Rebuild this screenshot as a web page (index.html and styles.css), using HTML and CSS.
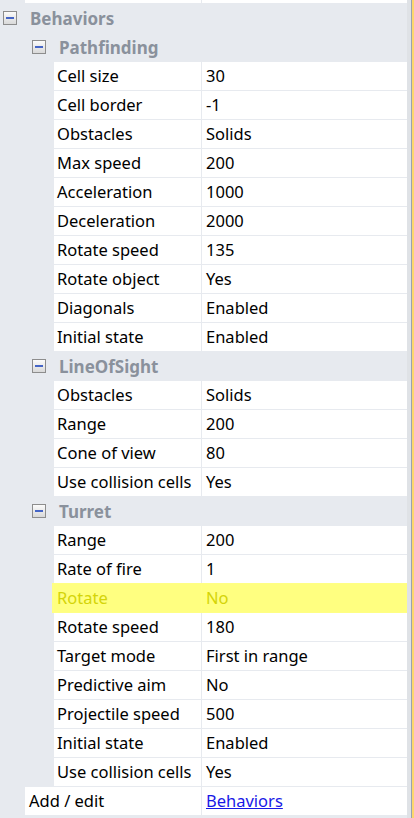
FILE: index.html
```html
<!DOCTYPE html>
<html>
<head>
<meta charset="utf-8">
<link rel="stylesheet" href="styles.css">
</head>
<body>
<div class="frame">
  <div class="panel">
    <div class="row l1 partial"><div class="cell"></div><div class="cell"></div></div>

    <div class="cat c0"><span class="box"></span><span class="title">Behaviors</span></div>
    <div class="cat c1"><span class="box"></span><span class="title">Pathfinding</span></div>
    <div class="row l2"><div class="cell">Cell size</div><div class="cell">30</div></div>
    <div class="row l2"><div class="cell">Cell border</div><div class="cell">-1</div></div>
    <div class="row l2"><div class="cell">Obstacles</div><div class="cell">Solids</div></div>
    <div class="row l2"><div class="cell">Max speed</div><div class="cell">200</div></div>
    <div class="row l2"><div class="cell">Acceleration</div><div class="cell">1000</div></div>
    <div class="row l2"><div class="cell">Deceleration</div><div class="cell">2000</div></div>
    <div class="row l2"><div class="cell">Rotate speed</div><div class="cell">135</div></div>
    <div class="row l2"><div class="cell">Rotate object</div><div class="cell">Yes</div></div>
    <div class="row l2"><div class="cell">Diagonals</div><div class="cell">Enabled</div></div>
    <div class="row l2"><div class="cell">Initial state</div><div class="cell">Enabled</div></div>

    <div class="cat c1"><span class="box"></span><span class="title">LineOfSight</span></div>
    <div class="row l2"><div class="cell">Obstacles</div><div class="cell">Solids</div></div>
    <div class="row l2"><div class="cell">Range</div><div class="cell">200</div></div>
    <div class="row l2"><div class="cell">Cone of view</div><div class="cell">80</div></div>
    <div class="row l2"><div class="cell">Use collision cells</div><div class="cell">Yes</div></div>

    <div class="cat c1"><span class="box"></span><span class="title">Turret</span></div>
    <div class="row l2"><div class="cell">Range</div><div class="cell">200</div></div>
    <div class="row l2"><div class="cell">Rate of fire</div><div class="cell">1</div></div>
    <div class="row l2 hl"><div class="cell">Rotate</div><div class="cell">No</div></div>
    <div class="row l2"><div class="cell">Rotate speed</div><div class="cell">180</div></div>
    <div class="row l2"><div class="cell">Target mode</div><div class="cell">First in range</div></div>
    <div class="row l2"><div class="cell">Predictive aim</div><div class="cell">No</div></div>
    <div class="row l2"><div class="cell">Projectile speed</div><div class="cell">500</div></div>
    <div class="row l2"><div class="cell">Initial state</div><div class="cell">Enabled</div></div>
    <div class="row l2"><div class="cell">Use collision cells</div><div class="cell">Yes</div></div>

    <div class="row l1"><div class="cell">Add / edit</div><div class="cell"><a class="link" href="#">Behaviors</a></div></div>
  </div>
  <div class="edge"></div>
  <div class="edge-line"></div>
  <div class="edge-accent"></div>
</div>
</body>
</html>
```

FILE: styles.css
```css
html, body {
  margin: 0;
  padding: 0;
  background: #e7eaef;
}

body {
  font-family: "Noto Sans", "Open Sans", sans-serif;
  font-size: 16.5px;
  color: #000;
  overflow: hidden;
}

.frame {
  display: flex;
  height: 818px;
}

.panel {
  flex: 1;
  display: flex;
  flex-direction: column;
  gap: 1px;
  background: #e7eaef;
}

.edge {
  width: 4px;
  background: #dfe2e6;
}

.edge-line {
  width: 1px;
  background: #9aa2b0;
}

.edge-accent {
  width: 2px;
  background: #fdd76c;
}

.row {
  display: grid;
  column-gap: 1px;
  height: 28px;
  flex: none;
}

.row.l1 {
  margin-left: 25px;
  grid-template-columns: 176px 1fr;
}

.row.l2 {
  margin-left: 54px;
  grid-template-columns: 147px 1fr;
}

.row.partial {
  height: 3px;
}

.cell {
  background: #fff;
  padding-left: 4px;
  line-height: 28px;
  white-space: nowrap;
  overflow: hidden;
}

.row.l2 .cell:first-child {
  padding-left: 3px;
}

.row.hl {
  background: #ffff84;
  box-shadow: 0 0 0 1px #ffff84, -1px 0 0 1px #ffff84;
}

.row.hl .cell {
  background: #ffff80;
  color: #d4d408;
}

.cat {
  height: 28px;
  flex: none;
  display: flex;
  align-items: center;
}

.cat.c0 {
  padding-left: 3px;
}

.cat.c1 {
  padding-left: 32px;
}

.box {
  width: 14px;
  height: 14px;
  box-sizing: border-box;
  border: 1px solid #8d8d8d;
  background: linear-gradient(#fbfbfb, #d9d9d9);
  position: relative;
  flex: none;
}

.box::after {
  content: "";
  position: absolute;
  left: 2px;
  right: 2px;
  top: 5px;
  height: 2px;
  background: #4565c6;
}

.title {
  margin-left: 13px;
  font-size: 17px;
  font-weight: bold;
  color: #8a919c;
}

.link {
  color: #1818e6;
  text-decoration: underline;
}
```
